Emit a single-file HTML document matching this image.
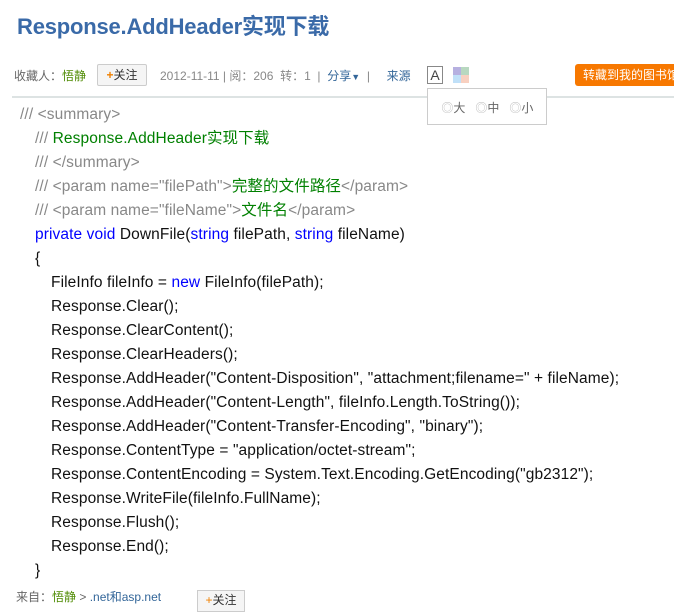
<!DOCTYPE html>
<html><head><meta charset="utf-8"><style>
body{margin:0;width:674px;height:598px;overflow:hidden;background:#fff;font-family:"Liberation Sans","Noto Sans CJK SC",sans-serif;position:relative}
.a{position:absolute;white-space:nowrap}
h1{position:absolute;left:17px;top:9px;margin:0;font-size:22px;font-weight:bold;color:#3a6aa8;letter-spacing:-0.2px}
.meta{font-size:12px;color:#666;top:67px}
.c{font-size:15.5px;color:#111;letter-spacing:0.1px;line-height:24px;margin-top:2px}
.g{color:#888}.gr{color:#008000}.k{color:#0000ff}
</style></head><body>
<h1>Response.AddHeader实现下载</h1>
<div class="a meta" style="left:14px">收藏人：<span style="color:#4d8a00">悟静</span></div>
<div class="a" style="left:97px;top:64px;width:48px;height:20px;border:1px solid #ccc;border-radius:2px;background:#f5f5f5;font-size:12px;line-height:20px;text-align:center;color:#333"><span style="color:#f08000;font-weight:bold">+</span>关注</div>
<div class="a meta" style="left:160px;color:#888">2012-11-11 | 阅：206&nbsp; 转：1 &nbsp;|&nbsp; <span style="color:#336699">分享</span><span style="color:#336699;font-size:9px">▼</span> &nbsp;|&nbsp;&nbsp;&nbsp;&nbsp; <span style="color:#336699">来源</span></div>
<div class="a" style="left:427px;top:66px;width:14px;height:16px;border:1px solid #888;font-size:14px;line-height:16px;text-align:center;color:#444">A</div>
<div class="a" style="left:453px;top:67px;width:16px;height:16px;">
<div class="a" style="left:0;top:0;width:8px;height:8px;background:#b6b0e0"></div><div class="a" style="left:8px;top:0;width:8px;height:8px;background:#b8d8c0"></div>
<div class="a" style="left:0;top:8px;width:8px;height:8px;background:#c0e0f8"></div><div class="a" style="left:8px;top:8px;width:8px;height:8px;background:#f8d0c0"></div></div>
<div class="a" style="left:575px;top:64px;width:110px;height:22px;background:#f77800;border-radius:3px;color:#fff;font-size:12px;line-height:22px;padding-left:8px">转藏到我的图书馆</div>
<div class="a" style="left:12px;top:96px;width:662px;height:2px;background:#dde3e3"></div>
<div class="a" style="left:427px;top:88px;width:118px;height:35px;border:1px solid #ccc;background:#fff;font-size:12px;color:#666;line-height:38px">&nbsp;&nbsp;&nbsp;&nbsp;<span style="color:#bbb">◎</span>大 &nbsp;&nbsp;<span style="color:#bbb">◎</span>中 &nbsp;&nbsp;<span style="color:#bbb">◎</span>小</div>
<div class="a c" style="left:20px;top:101px"><span class="g">/// &lt;summary&gt;</span></div>
<div class="a c" style="left:35px;top:125px"><span class="g">/// </span><span class="gr">Response.AddHeader实现下载</span></div>
<div class="a c" style="left:35px;top:149px"><span class="g">/// &lt;/summary&gt;</span></div>
<div class="a c" style="left:35px;top:173px"><span class="g">/// &lt;param name="filePath"&gt;</span><span class="gr">完整的文件路径</span><span class="g">&lt;/param&gt;</span></div>
<div class="a c" style="left:35px;top:197px"><span class="g">/// &lt;param name="fileName"&gt;</span><span class="gr">文件名</span><span class="g">&lt;/param&gt;</span></div>
<div class="a c" style="left:35px;top:221px"><span class="k">private void</span> DownFile(<span class="k">string</span> filePath, <span class="k">string</span> fileName)</div>
<div class="a c" style="left:35px;top:245px">{</div>
<div class="a c" style="left:51px;top:269px">FileInfo fileInfo = <span class="k">new</span> FileInfo(filePath);</div>
<div class="a c" style="left:51px;top:293px">Response.Clear();</div>
<div class="a c" style="left:51px;top:317px">Response.ClearContent();</div>
<div class="a c" style="left:51px;top:341px">Response.ClearHeaders();</div>
<div class="a c" style="left:51px;top:365px">Response.AddHeader("Content-Disposition", "attachment;filename=" + fileName);</div>
<div class="a c" style="left:51px;top:389px">Response.AddHeader("Content-Length", fileInfo.Length.ToString());</div>
<div class="a c" style="left:51px;top:413px">Response.AddHeader("Content-Transfer-Encoding", "binary");</div>
<div class="a c" style="left:51px;top:437px">Response.ContentType = "application/octet-stream";</div>
<div class="a c" style="left:51px;top:461px">Response.ContentEncoding = System.Text.Encoding.GetEncoding("gb2312");</div>
<div class="a c" style="left:51px;top:485px">Response.WriteFile(fileInfo.FullName);</div>
<div class="a c" style="left:51px;top:509px">Response.Flush();</div>
<div class="a c" style="left:51px;top:533px">Response.End();</div>
<div class="a c" style="left:35px;top:557px">}</div>
<div class="a" style="left:16px;top:588px;font-size:12px;color:#666">来自：<span style="color:#4d8a00">悟静</span> &gt; <span style="color:#336699">.net和asp.net</span></div>
<div class="a" style="left:197px;top:590px;width:46px;height:20px;border:1px solid #ccc;background:#f5f5f5;font-size:12px;color:#333;text-align:center;line-height:18px"><span style="color:#f08000">+</span>关注</div>
</body></html>
